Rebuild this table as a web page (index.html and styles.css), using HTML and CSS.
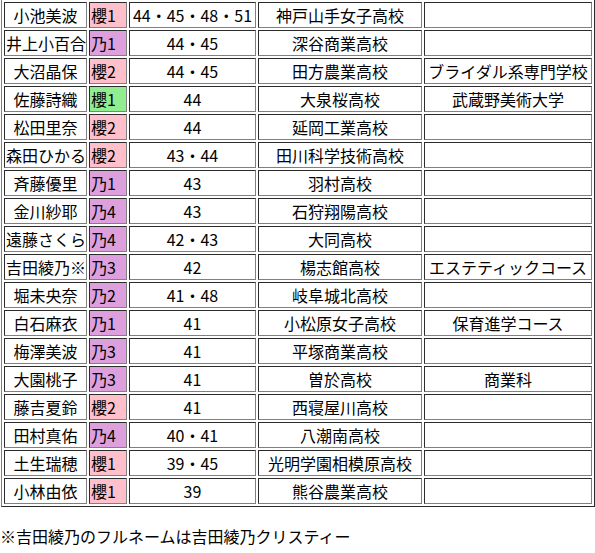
FILE: index.html
```html
<!DOCTYPE html>
<html lang="ja">
<head>
<meta charset="utf-8">
<link rel="stylesheet" href="styles.css">
</head>
<body>
<div class="page">
<table class="grid">
<tbody>
<tr><td class="name">小池美波</td><td class="grp sakura">櫻1</td><td class="num">44・45・48・51</td><td class="school">神戸山手女子高校</td><td class="extra"></td></tr>
<tr><td class="name">井上小百合</td><td class="grp nogi">乃1</td><td class="num">44・45</td><td class="school">深谷商業高校</td><td class="extra"></td></tr>
<tr><td class="name">大沼晶保</td><td class="grp sakura">櫻2</td><td class="num">44・45</td><td class="school">田方農業高校</td><td class="extra">ブライダル系専門学校</td></tr>
<tr><td class="name">佐藤詩織</td><td class="grp keyaki">櫻1</td><td class="num">44</td><td class="school">大泉桜高校</td><td class="extra">武蔵野美術大学</td></tr>
<tr><td class="name">松田里奈</td><td class="grp sakura">櫻2</td><td class="num">44</td><td class="school">延岡工業高校</td><td class="extra"></td></tr>
<tr><td class="name">森田ひかる</td><td class="grp sakura">櫻2</td><td class="num">43・44</td><td class="school">田川科学技術高校</td><td class="extra"></td></tr>
<tr><td class="name">斉藤優里</td><td class="grp nogi">乃1</td><td class="num">43</td><td class="school">羽村高校</td><td class="extra"></td></tr>
<tr><td class="name">金川紗耶</td><td class="grp nogi">乃4</td><td class="num">43</td><td class="school">石狩翔陽高校</td><td class="extra"></td></tr>
<tr><td class="name">遠藤さくら</td><td class="grp nogi">乃4</td><td class="num">42・43</td><td class="school">大同高校</td><td class="extra"></td></tr>
<tr><td class="name">吉田綾乃※</td><td class="grp nogi">乃3</td><td class="num">42</td><td class="school">楊志館高校</td><td class="extra">エステティックコース</td></tr>
<tr><td class="name">堀未央奈</td><td class="grp nogi">乃2</td><td class="num">41・48</td><td class="school">岐阜城北高校</td><td class="extra"></td></tr>
<tr><td class="name">白石麻衣</td><td class="grp nogi">乃1</td><td class="num">41</td><td class="school">小松原女子高校</td><td class="extra">保育進学コース</td></tr>
<tr><td class="name">梅澤美波</td><td class="grp nogi">乃3</td><td class="num">41</td><td class="school">平塚商業高校</td><td class="extra"></td></tr>
<tr><td class="name">大園桃子</td><td class="grp nogi">乃3</td><td class="num">41</td><td class="school">曽於高校</td><td class="extra">商業科</td></tr>
<tr><td class="name">藤吉夏鈴</td><td class="grp sakura">櫻2</td><td class="num">41</td><td class="school">西寝屋川高校</td><td class="extra"></td></tr>
<tr><td class="name">田村真佑</td><td class="grp nogi">乃4</td><td class="num">40・41</td><td class="school">八潮南高校</td><td class="extra"></td></tr>
<tr><td class="name">土生瑞穂</td><td class="grp sakura">櫻1</td><td class="num">39・45</td><td class="school">光明学園相模原高校</td><td class="extra"></td></tr>
<tr><td class="name">小林由依</td><td class="grp sakura">櫻1</td><td class="num">39</td><td class="school">熊谷農業高校</td><td class="extra"></td></tr>
</tbody>
</table>
<p class="note">※吉田綾乃のフルネームは吉田綾乃クリスティー</p>
</div>
</body>
</html>
```

FILE: styles.css
```css
html, body {
  margin: 0;
  padding: 0;
  background: #ffffff;
}

body {
  font-family: "Noto Sans CJK JP", "Noto Sans", sans-serif;
  font-size: 16px;
  color: #000000;
}

.page {
  margin: -1px 0 0 1px;
}

.grid {
  width: 594px;
  table-layout: fixed;
  border-collapse: separate;
  border-spacing: 2px;
  border: 1px outset grey;
}

.grid td {
  box-sizing: border-box;
  height: 26px;
  padding: 1px;
  border: 1px inset grey;
  line-height: 22px;
  white-space: nowrap;
  overflow: hidden;
  text-align: center;
  vertical-align: middle;
}

.grid td.name { width: 83px; }
.grid td.grp { width: 38px; text-align: left; }
.grid td.num { width: 127px; }
.grid td.school { width: 164px; }
.grid td.extra { width: 168px; }

.sakura { background: #ffc0cb; }
.nogi { background: #dda0dd; }
.keyaki { background: #90ee90; }

.note {
  margin: 18px 0 0 -1px;
  line-height: 23px;
}
```
